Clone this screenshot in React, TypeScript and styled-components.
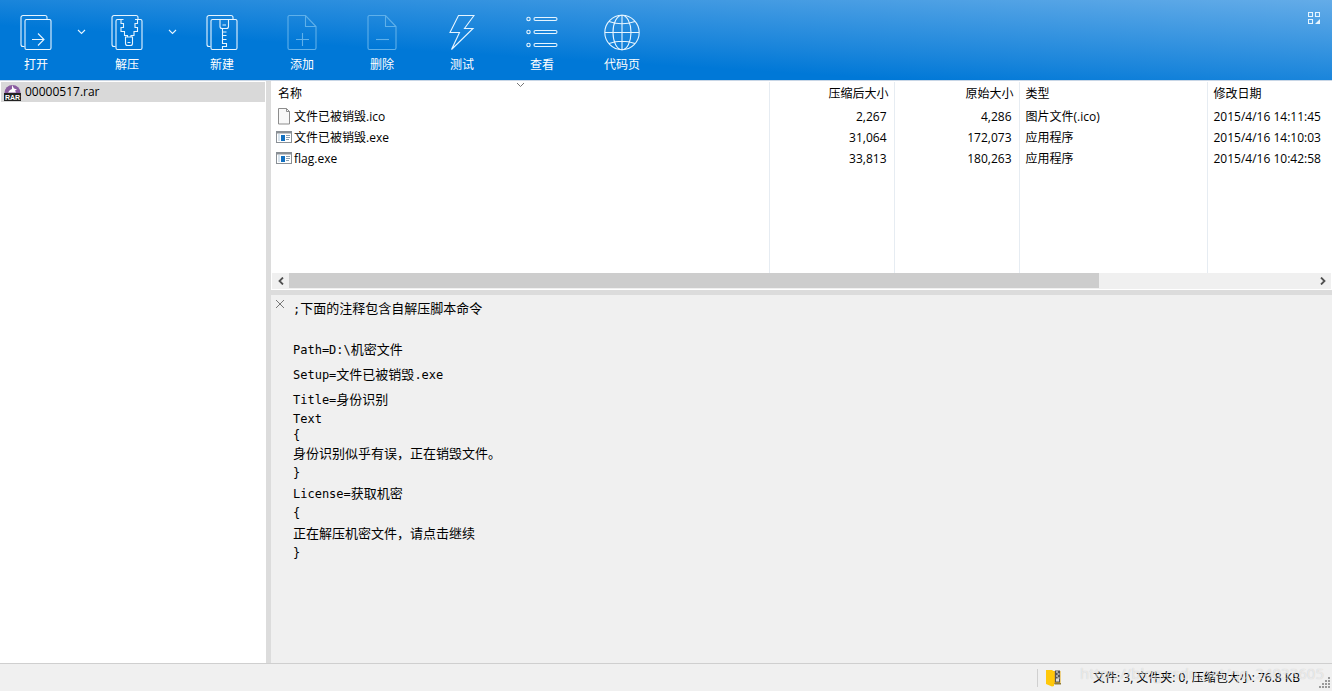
import React from 'react';
import styled, { createGlobalStyle } from 'styled-components';

const UI = `"Open Sans", "Noto Sans CJK SC", sans-serif`;
const MONO = `"DejaVu Sans Mono", "Noto Sans CJK SC", monospace`;

const GlobalStyle = createGlobalStyle`
  * { box-sizing: border-box; }
  body { margin: 0; font: 12px/16px ${UI}; color: #000; background: #fff; }
  button { font: inherit; color: inherit; background: none; border: 0; padding: 0; margin: 0; }
`;

const Window = styled.div`
  display: flex;
  flex-direction: column;
  min-height: 100vh;
`;

const Toolbar = styled.header`
  display: flex;
  height: 81px;
  flex: none;
  color: #fff;
  background: linear-gradient(to bottom left, #64ace8 0%, #1a85db 50%, #0078d7 66%);
  border-bottom: 1px solid #c8d6e6;
`;

const Tool = styled.button<{ $wide?: boolean }>`
  display: flex;
  flex-direction: column;
  align-items: center;
  gap: 6px;
  width: ${(p) => (p.$wide ? 80 : 72)}px;
  padding-top: 14px;
  white-space: nowrap;
`;

const DropButton = styled.button`
  display: flex;
  justify-content: center;
  width: 19px;
  padding-top: 29px;
`;

const LayoutButton = styled.button`
  margin-left: auto;
  padding: 12px 12px 0 0;
  display: flex;
`;

const Line = styled.svg<{ $dim?: boolean }>`
  display: block;
  flex: none;
  fill: none;
  stroke: ${(p) => (p.$dim ? '#5fb0ea' : '#e6f5ff')};
  stroke-width: 1.1;
`;

const Body = styled.main`
  display: flex;
  flex: 1;
`;

const Tree = styled.nav`
  width: 266px;
  flex: none;
  padding: 1px;
`;

const TreeItem = styled.a`
  display: flex;
  align-items: center;
  gap: 4px;
  height: 20px;
  padding-left: 3px;
  color: #000;
  text-decoration: none;
  background: #d9d9d9;
`;

const Content = styled.div`
  display: flex;
  flex-direction: column;
  flex: 1;
  min-width: 0;
  border-left: 5px solid #dcdcdc;
`;

const ListPane = styled.section`
  display: flex;
  flex-direction: column;
  height: 214px;
  padding-top: 1px;
  border-bottom: 5px solid #dcdcdc;
`;

const FileTable = styled.table`
  width: 100%;
  height: 191px;
  border-collapse: collapse;
  table-layout: fixed;
`;

const Row = styled.tr<{ $h?: number }>`
  height: ${(p) => (p.$h ? p.$h + 'px' : 'auto')};
`;

const HeadCell = styled.th<{ $right?: boolean }>`
  position: relative;
  padding: 0 5px 0 6px;
  font-weight: 400;
  text-align: ${(p) => (p.$right ? 'right' : 'left')};
  border-left: 1px solid #e6ecf2;
  &:first-child { border-left: 0; padding-left: 7px; }
`;

const Cell = styled.td<{ $right?: boolean }>`
  padding: 0 7px 0 6px;
  white-space: nowrap;
  text-align: ${(p) => (p.$right ? 'right' : 'left')};
  border-left: 1px solid #e6ecf2;
  &:first-child { border-left: 0; padding-left: 5px; }
`;

const FileName = styled.span`
  display: flex;
  align-items: center;
  gap: 2px;
`;

const SortMark = styled.svg`
  position: absolute;
  top: 0;
  left: 50%;
  margin-left: -4px;
  fill: none;
  stroke: #777;
`;

const ScrollBar = styled.div`
  display: flex;
  height: 16px;
  margin: 0 1px;
  background: #f0f0f0;
`;

const ScrollButton = styled.button`
  display: flex;
  align-items: center;
  justify-content: center;
  width: 17px;
  flex: none;
`;

const Track = styled.div`
  flex: 1;
`;

const Thumb = styled.div`
  width: 79%;
  height: 15px;
  background: #cdcdcd;
`;

const CommentPane = styled.section`
  display: flex;
  align-items: flex-start;
  flex: 1;
  background: #f0f0f0;
`;

const CloseButton = styled.button`
  display: flex;
  width: 22px;
  flex: none;
  padding: 4px 0 0 4px;
`;

const CommentText = styled.div`
  padding-top: 3px;
  font: 12px/20px ${MONO};
`;

const CommentLine = styled.div<{ $h: number }>`
  height: ${(p) => p.$h}px;
  line-height: ${(p) => p.$h}px;
  white-space: pre;
`;

const Han = styled.span`
  font-family: "Noto Sans CJK SC", sans-serif;
  font-size: 13px;
`;

const StatusBar = styled.footer`
  position: relative;
  display: flex;
  justify-content: flex-end;
  align-items: center;
  height: 28px;
  background: #f0f0f0;
  border-top: 1px solid #cfcfcf;
`;

const StatusInfo = styled.div`
  display: flex;
  align-items: center;
  width: 295px;
  height: 18px;
  padding-left: 8px;
  gap: 31px;
  white-space: nowrap;
  border-left: 1px solid #d0d0d0;
`;

const Watermark = styled.span`
  position: absolute;
  right: 8px;
  top: 0;
  font-size: 15px;
  line-height: 18px;
  color: rgba(255, 255, 255, 0.6);
  text-shadow: 0 0 1px rgba(0, 0, 0, 0.2);
`;

const Grip = styled.svg`
  position: absolute;
  right: 2px;
  bottom: 3px;
  fill: #9a9a9a;
`;

const OpenIcon = () => (
  <Line width="34" height="37" viewBox="0 0 34 37">
    <path d="M5.5 32.5H4a2 2 0 0 1-2-2V3.500a2 2 0 0 1 2-2h22a2 2 0 0 1 2 2V5" />
    <rect x="6" y="5.500" width="26" height="30" rx="1.500" />
    <path d="M13 25.500h12M19 19.500l6 6-6 6" />
  </Line>
);

const ExtractIcon = () => (
  <Line width="34" height="37" viewBox="0 0 34 37">
    <path d="M5.5 32.500H4a2 2 0 0 1-2-2V3.500a2 2 0 0 1 2-2h22a2 2 0 0 1 2 2V5" />
    <path d="M13.500 5.500H7.500a1.500 1.500 0 0 0-1.500 1.500v27a1.500 1.500 0 0 0 1.500 1.500h23a1.500 1.500 0 0 0 1.500-1.500V7a1.500 1.500 0 0 0-1.500-1.500h-5.500" />
    <path d="M11 5.500v4h2.500v4H11v4h3.500v4h3V23M27.500 5.500v4H25v4h2.500v4h-3.500v4h-3V23M15.500 23h7v6.500a2 2 0 0 1-2 2h-3a2 2 0 0 1-2-2zM17.500 28.500h3" />
  </Line>
);

const NewIcon = () => (
  <Line width="34" height="37" viewBox="0 0 34 37">
    <path d="M5.5 32.500H4a2 2 0 0 1-2-2V3.500a2 2 0 0 1 2-2h22a2 2 0 0 1 2 2V5" />
    <rect x="6" y="5.500" width="26" height="30" rx="1.500" />
    <path d="M15 5.500v7a2 2 0 0 0 2 2h4.500a2 2 0 0 0 2-2v-7M17.500 11h3.500M17.500 14.500v3.500h4M17.500 18v3.500h4M17.500 21.500v4h4M17.500 25.500v4h4v3h-4v3" />
  </Line>
);

const PageIcon = ({ plus }: { plus?: boolean }) => (
  <Line $dim width="30" height="37" viewBox="0 0 30 37">
    <path d="M18.500 1.500H2.500a1.500 1.500 0 0 0-1.500 1.500v31a1.500 1.500 0 0 0 1.500 1.500h25a1.500 1.500 0 0 0 1.500-1.500V12.500zV12.500H29" />
    <path d={plus ? 'M9 25.500h13M15.500 19v13' : 'M9 25.500h13'} />
  </Line>
);

const BoltIcon = () => (
  <Line width="26" height="37" viewBox="0 0 26 37">
    <path d="M9.500 1.500H25L15.500 14.500h8.500L2.500 35.500 10.500 18.500H1z" />
  </Line>
);

const ViewIcon = () => (
  <Line width="32" height="37" viewBox="0 0 32 37">
    {[5, 18, 31].map((y) => (
      <g key={y}>
        <circle cx="2.500" cy={y} r="1.700" />
        <rect x="8" y={y - 1.5} width="23" height="3" rx="1.500" />
      </g>
    ))}
  </Line>
);

const GlobeIcon = () => (
  <Line width="36" height="37" viewBox="0 0 36 37">
    <circle cx="18" cy="18.500" r="17.200" />
    <ellipse cx="18" cy="18.500" rx="9" ry="17.200" />
    <path d="M18 1.500v34M1 18.500h34M5 7.500q13 4.500 26 0M5 29.500q13-4.500 26 0" />
  </Line>
);

const RarMark = styled.text`
  font: 700 7px "Liberation Sans", sans-serif;
  fill: #fff;
  text-anchor: middle;
`;

const RarIcon = () => (
  <svg width="17" height="17" viewBox="0 0 17 17">
    <path d="M.500 9a8 8 0 0 1 16 0z" fill="#8a5ca0" />
    <path d="M8 1l2 3.500 3 1-2 1 1 2H4l2-2.500 2-1z" fill="#fff" />
    <rect y="9" width="17" height="8" fill="#222" />
    <RarMark x="8.500" y="15.500">RAR</RarMark>
  </svg>
);

const DocIcon = () => (
  <svg width="16" height="17" viewBox="0 0 16 17">
    <path d="M2.500.500h8l3 3v12.500h-11z" fill="#f8f8f8" stroke="#8d8d8d" />
    <path d="M10.500.500v3h3" fill="none" stroke="#8d8d8d" />
  </svg>
);

const ExeIcon = () => (
  <svg width="16" height="16" viewBox="0 0 16 16">
    <rect x=".5" y="1.500" width="15" height="11" fill="#fff" stroke="#8a9096" />
    <path d="M0 1h16v2.500H0z" fill="#8a9096" />
    <rect x="2" y="4" width="2" height="7" fill="#d8e4ee" />
    <rect x="5" y="5" width="4" height="6" fill="#1270c0" />
    <path d="M10 5.500h4M10 7.500h4M10 9.500h3" stroke="#8a9fb0" />
  </svg>
);

const ZipIcon = () => (
  <svg width="16" height="18" viewBox="0 0 16 18">
    <path d="M4 2h10.500v13H4z" fill="#e9b020" />
    <path d="M0 1h6l2 1.500V17l-2 .5L0 15z" fill="#ffc80a" />
    <rect x="9" y="1.500" width="5" height="12" fill="#555" />
    <path d="M10 3h2M11.500 5h2M10 7h2M11.500 9h2" stroke="#fff" />
    <rect x="10" y="9.500" width="3" height="3" fill="#ddd" />
    <path d="M8.500 14h6.500v1.500H8.500z" fill="#8c7a3c" />
  </svg>
);

const Chevron = () => (
  <Line width="9" height="6" viewBox="0 0 9 6">
    <path d="M1 1l3.500 3.500L8 1" />
  </Line>
);

const files = [
  { name: '文件已被销毁.ico', packed: '2,267', size: '4,286', type: '图片文件(.ico)', date: '2015/4/16 14:11:45', doc: true },
  { name: '文件已被销毁.exe', packed: '31,064', size: '172,073', type: '应用程序', date: '2015/4/16 14:10:03' },
  { name: 'flag.exe', packed: '33,813', size: '180,263', type: '应用程序', date: '2015/4/16 10:42:58' },
];

const comment: [string, number][] = [
  [';下面的注释包含自解压脚本命令', 20],
  ['', 18],
  ['Path=D:\\机密文件', 25],
  ['Setup=文件已被销毁.exe', 25],
  ['Title=身份识别', 25],
  ['Text', 16],
  ['{', 16],
  ['身份识别似乎有误，正在销毁文件。', 20],
  ['}', 20],
  ['License=获取机密', 20],
  ['{', 20],
  ['正在解压机密文件，请点击继续', 20],
  ['}', 20],
];

const splitRuns = (text: string) =>
  text
    .split(/([^\x00-\x7f]+)/)
    .filter(Boolean)
    .map((run, i) => (run.charCodeAt(0) > 127 ? <Han key={i}>{run}</Han> : run));

export default function App() {
  return (
    <>
      <GlobalStyle />
      <Window>
        <Toolbar>
          <Tool><OpenIcon />打开</Tool>
          <DropButton aria-label="打开选项"><Chevron /></DropButton>
          <Tool><ExtractIcon />解压</Tool>
          <DropButton aria-label="解压选项"><Chevron /></DropButton>
          <Tool $wide><NewIcon />新建</Tool>
          <Tool $wide><PageIcon plus />添加</Tool>
          <Tool $wide><PageIcon />删除</Tool>
          <Tool $wide><BoltIcon />测试</Tool>
          <Tool $wide><ViewIcon />查看</Tool>
          <Tool $wide><GlobeIcon />代码页</Tool>
          <LayoutButton aria-label="布局">
            <Line width="12" height="12" viewBox="0 0 12 12">
              <path d="M.500.500h4v4h-4zM7.500.500h4v4h-4zM.500 7.500h4v4h-4z" />
              <path d="M12 7v5H7z" fill="#e6f5ff" stroke="none" />
            </Line>
          </LayoutButton>
        </Toolbar>
        <Body>
          <Tree>
            <TreeItem href="#archive"><RarIcon />00000517.rar</TreeItem>
          </Tree>
          <Content>
            <ListPane>
              <FileTable>
                <colgroup>
                  <col />
                  <col width="125" />
                  <col width="125" />
                  <col width="188" />
                  <col width="125" />
                </colgroup>
                <thead>
                  <Row $h={24}>
                    <HeadCell>
                      名称
                      <SortMark width="9" height="6" viewBox="0 0 9 6">
                        <path d="M1 1l3.500 3.500L8 1" />
                      </SortMark>
                    </HeadCell>
                    <HeadCell $right>压缩后大小</HeadCell>
                    <HeadCell $right>原始大小</HeadCell>
                    <HeadCell>类型</HeadCell>
                    <HeadCell>修改日期</HeadCell>
                  </Row>
                </thead>
                <tbody>
                  {files.map((f) => (
                    <Row key={f.name} $h={21}>
                      <Cell><FileName>{f.doc ? <DocIcon /> : <ExeIcon />}{f.name}</FileName></Cell>
                      <Cell $right>{f.packed}</Cell>
                      <Cell $right>{f.size}</Cell>
                      <Cell>{f.type}</Cell>
                      <Cell>{f.date}</Cell>
                    </Row>
                  ))}
                  <Row aria-hidden="true">
                    <Cell /><Cell /><Cell /><Cell /><Cell />
                  </Row>
                </tbody>
              </FileTable>
              <ScrollBar>
                <ScrollButton aria-label="向左滚动">
                  <svg width="6" height="8" viewBox="0 0 6 8" fill="none" stroke="#505050" strokeWidth="1.800">
                    <path d="M5 .500L1.500 4 5 7.500" />
                  </svg>
                </ScrollButton>
                <Track><Thumb /></Track>
                <ScrollButton aria-label="向右滚动">
                  <svg width="6" height="8" viewBox="0 0 6 8" fill="none" stroke="#505050" strokeWidth="1.800">
                    <path d="M1 .500L4.500 4 1 7.500" />
                  </svg>
                </ScrollButton>
              </ScrollBar>
            </ListPane>
            <CommentPane>
              <CloseButton aria-label="关闭注释">
                <svg width="10" height="10" viewBox="0 0 10 10" stroke="#777">
                  <path d="M1 1l8 8M9 1L1 9" />
                </svg>
              </CloseButton>
              <CommentText>
                {comment.map(([text, h], i) => (
                  <CommentLine key={i} $h={h}>{splitRuns(text)}</CommentLine>
                ))}
              </CommentText>
            </CommentPane>
          </Content>
        </Body>
        <StatusBar>
          <StatusInfo><ZipIcon /><span>文件: 3, 文件夹: 0, 压缩包大小: 76.8 KB</span></StatusInfo>
          <Watermark>https://blog.csdn.net/qq_24033605</Watermark>
          <Grip width="11" height="11" viewBox="0 0 11 11">
            <path d="M9 0h2v2H9zM6 3h2v2H6zM9 3h2v2H9zM3 6h2v2H3zM6 6h2v2H6zM9 6h2v2H9zM0 9h2v2H0zM3 9h2v2H3zM6 9h2v2H6zM9 9h2v2H9z" />
          </Grip>
        </StatusBar>
      </Window>
    </>
  );
}
